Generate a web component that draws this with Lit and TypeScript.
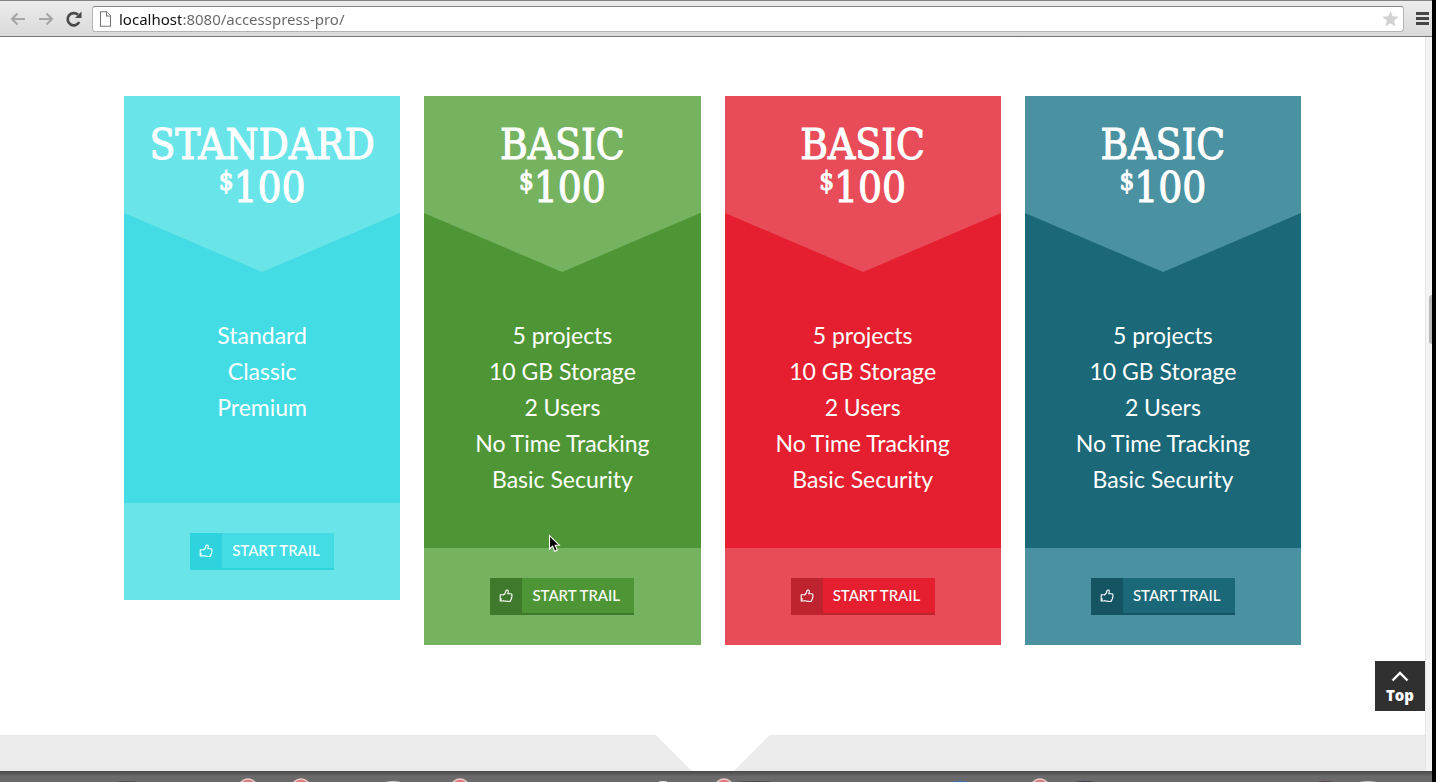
import { LitElement, html, css, svg } from "lit";
import { customElement, property } from "lit/decorators.js";

type Plan = { tone: string; name: string; price: string; items: string[] };

const basic = ["5 projects", "10 GB Storage", "2 Users", "No Time Tracking", "Basic Security"];
const plans: Plan[] = [
  { tone: "cyan", name: "Standard", price: "100", items: ["Standard", "Classic", "Premium"] },
  { tone: "green", name: "Basic", price: "100", items: basic },
  { tone: "red", name: "Basic", price: "100", items: basic },
  { tone: "teal", name: "Basic", price: "100", items: basic },
];

const dockIcons = [
  { x: 127, r: 12, fill: "#4c4c4e" },
  { x: 393, r: 8, fill: "#d4d4d4" }, { x: 663, r: 5, fill: "#e8e8e8" }, { x: 755, r: 20, fill: "#4a4a4e" },
  { x: 960, r: 8, fill: "#2f6fd6" }, { x: 1085, r: 11, fill: "#3c3c52" },
  { x: 1325, r: 9, fill: "#5a3d62" }, { x: 1368, r: 9, fill: "#cccccc" },
];
const dockBadges = [248, 301, 460, 724, 1040];

@customElement("price-card")
export class PriceCard extends LitElement {
  @property({ attribute: false }) plan!: Plan;

  static styles = css`
    :host { display: block; color: #fff; text-align: center; }
    .card { background: var(--main); }
    .cyan { --main: #44dce4; --light: #69e4e8; --dark: #2fd3dd; }
    .green { --main: #4e9635; --light: #76b361; --dark: #3f792b; }
    .red { --main: #e51f30; --light: #e84c59; --dark: #bd2430; }
    .teal { --main: #1a6878; --light: #4a92a1; --dark: #155463; }
    .head {
      background: var(--light);
      padding: 27px 8px 4px;
      font: 500 42px/43px "DejaVu Serif Condensed", "DejaVu Serif", serif;
      -webkit-text-stroke: 1px #fff;
      text-transform: uppercase;
    }
    .name, .price { margin: 0; font: inherit; }
    .currency { font-size: 26px; line-height: 0; vertical-align: 12px; }
    .chevron { display: block; width: 100%; height: 59px; fill: var(--light); }
    .body { min-height: 290px; box-sizing: border-box; padding-bottom: 51px; }
    .list { list-style: none; margin: 0; padding: 45px 0 0; font: 400 23px/36px Lato, sans-serif; }
    .foot { background: var(--light); padding: 30px 0; display: flex; justify-content: center; }
    .start {
      display: flex; height: 37px; padding: 0; border: 0; border-bottom: 2px solid var(--dark);
      background: var(--main); color: #fff; font: 500 15px/34px Lato, sans-serif;
      text-transform: uppercase; cursor: pointer;
    }
    .thumb { width: 32px; height: 35px; background: var(--dark); display: grid; place-items: center; }
    .label { width: 112px; padding-left: 10px; box-sizing: border-box; text-align: left; }
  `;

  render() {
    const p = this.plan;
    return html`
      <article class="card ${p.tone}">
        <header class="head">
          <h2 class="name">${p.name}</h2>
          <p class="price"><span class="currency">$</span>${p.price}</p>
        </header>
        <div class="body">
          <svg class="chevron" viewBox="0 0 276 59" preserveAspectRatio="none" aria-hidden="true">
            <path d="M0 0H276L138 59Z" />
          </svg>
          <ul class="list">${p.items.map((i) => html`<li>${i}</li>`)}</ul>
        </div>
        <footer class="foot">
          <button class="start" type="button">
            <span class="thumb">
              <svg width="14" height="14" viewBox="0 0 14 14" fill="none" stroke="#fff" stroke-width="1.1" stroke-linejoin="round" aria-hidden="true">
                <path d="M3.8 6.2C5.6 5.5 6.9 3.3 7.2 1.2C8.6 .5 9.6 1.5 9.3 2.9L8.7 4.8H11.7C13 4.8 13.3 6 12.7 6.8C13.2 7.5 13 8.4 12.4 8.8C12.7 9.5 12.4 10.3 11.8 10.6C11.9 11.8 11.3 12.5 9.9 12.5C7.2 12.5 5.8 11.8 3.8 11.6" />
                <path d="M3.8 5.8H1.2V12H3.8" />
                <path d="M2 9V12" />
              </svg>
            </span>
            <span class="label">Start Trail</span>
          </button>
        </footer>
      </article>
    `;
  }
}

@customElement("app-root")
export class AppRoot extends LitElement {
  static styles = css`
    :host {
      display: flex; flex-direction: column; height: 100vh; overflow: hidden; position: relative;
      box-sizing: border-box; border-right: 4px solid #000; background: #fff;
    }
    .toolbar {
      display: flex; align-items: center; flex: none; height: 37px; box-sizing: border-box;
      padding: 0 1px 0 8px; gap: 8px;
      border-top: 1px solid #858184; border-bottom: 1px solid #77777a;
      background: linear-gradient(#ececec, #dadada);
    }
    .nav { display: grid; place-items: center; width: 20px; height: 24px; padding: 0; border: 0; background: none; }
    .omnibox {
      display: flex; align-items: center; flex: 1; min-width: 0; height: 26px; box-sizing: border-box;
      padding: 0 4px 0 6px; border: 1px solid #b4b4b4; border-top-color: #858588; border-radius: 3px; background: #fff;
    }
    .address { flex: 1; height: 24px; margin-left: 7px; font: 400 15px/24px "Noto Sans", sans-serif; }
    .url {
      width: 100%; height: 24px; padding: 0; border: 0; outline: 0; font: inherit;
      background: linear-gradient(90deg, #111 62px, #666 62px); background-clip: text; -webkit-background-clip: text;
      color: transparent;
    }
    .tools { margin-left: 2px; width: 17px; }
    .view { display: flex; flex: 1; min-height: 0; }
    .page { flex: 1; min-width: 0; overflow: hidden; }
    .track { display: flex; align-items: center; justify-content: flex-end; flex: none; width: 7px; box-sizing: border-box; border-left: 1px solid #e6e6e6; background: #f4f4f4; }
    .grip { width: 3px; height: 49px; margin-bottom: 170px; border-radius: 3px 0 0 3px; background: #b9b9b9; }
    .plans {
      display: grid; grid-template-columns: repeat(4, minmax(0, 1fr)); gap: 24px; align-items: start;
      max-width: 1177px; margin: 0 auto; padding: 59px 0 90px;
    }
    .band { height: 200px; background: #ebebeb; }
    .notch { display: block; margin: 0 auto; fill: #fff; }
    .dock { display: block; flex: none; width: 100%; height: 11px; background: linear-gradient(#494949, #6a6a6a 50%); }
    .top {
      position: absolute; right: 7px; bottom: 71px; width: 50px; height: 50px; padding: 4px 0 0; box-sizing: border-box;
      display: flex; flex-direction: column; align-items: center; justify-content: center; gap: 3px;
      background: #303030; color: #fff; text-decoration: none; font: 800 15px/20px "Open Sans", sans-serif;
    }
    .cursor { position: absolute; left: 548px; top: 534px; }
  `;

  render() {
    return html`
      <nav class="toolbar" aria-label="Browser">
        <button class="nav" aria-label="Back">
          <svg width="16" height="14" fill="none" stroke="#a6a6a6" stroke-width="2.2"><path d="M15 7H2M7.5 1.5L2 7L7.5 12.5" /></svg>
        </button>
        <button class="nav" aria-label="Forward">
          <svg width="16" height="14" fill="none" stroke="#a6a6a6" stroke-width="2.2"><path d="M1 7H14M8.5 1.5L14 7L8.5 12.5" /></svg>
        </button>
        <button class="nav" aria-label="Reload">
          <svg width="18" height="18" fill="none"><path d="M14.2 12A6.1 6.1 0 1 1 13 4.8" stroke="#4a4a4a" stroke-width="2.7" /><path d="M16.5 1.5V8H10Z" fill="#4a4a4a" /></svg>
        </button>
        <div class="omnibox">
          <svg width="13" height="16" fill="#fff" stroke="#777" stroke-width="1.1" aria-hidden="true"><path d="M1.5 .8H7.5L11.5 5V15.2H1.5Z" /><path d="M7.5 .8V5H11.5" /></svg>
          <div class="address"><input class="url" aria-label="Address" value="localhost:8080/accesspress-pro/" /></div>
          <svg width="17" height="16" viewBox="0 0 17 16" fill="#d2d2d2" aria-hidden="true"><path d="M8.5 0L10.7 5.3L16.8 5.8L12.1 9.6L13.6 15.4L8.5 12.3L3.4 15.4L4.9 9.6L.2 5.8L6.3 5.3Z" /></svg>
        </div>
        <button class="nav tools" aria-label="Menu">
          <svg width="13" height="13" fill="#454545"><path d="M0 0H13V3H0ZM0 5H13V8H0ZM0 10H13V13H0Z" /></svg>
        </button>
      </nav>
      <div class="view">
        <main class="page">
          <section class="plans">${plans.map((p) => html`<price-card .plan=${p}></price-card>`)}</section>
          <section class="band">
            <svg class="notch" width="114" height="57" aria-hidden="true"><path d="M0 0H114L57 57Z" /></svg>
          </section>
        </main>
        <div class="track"><div class="grip"></div></div>
      </div>
      <svg class="dock" viewBox="0 0 1432 11" preserveAspectRatio="none" aria-hidden="true">
        ${dockIcons.map((d) => svg`<ellipse cx=${d.x} cy="12" rx=${d.r} ry="2" fill=${d.fill} />`)}
        ${dockBadges.map((x) => svg`<circle cx=${x} cy="17" r="9" fill="#dc7c7c" stroke="#ecc9c9" stroke-width="1.5" />`)}
      </svg>
      <a class="top" href="#top">
        <svg width="18" height="11" fill="none" stroke="#fff" stroke-width="2.4" aria-hidden="true"><path d="M1.5 9.5L9 2L16.5 9.5" /></svg>
        <span>Top</span>
      </a>
      <svg class="cursor" width="14" height="20" aria-hidden="true">
        <path d="M1.5 1.5V15L4.6 12.2L6.7 17.2L9.3 16.1L7.2 11.2H11.3Z" fill="#000" stroke="#fff" stroke-width="1.1" />
      </svg>
    `;
  }
}
